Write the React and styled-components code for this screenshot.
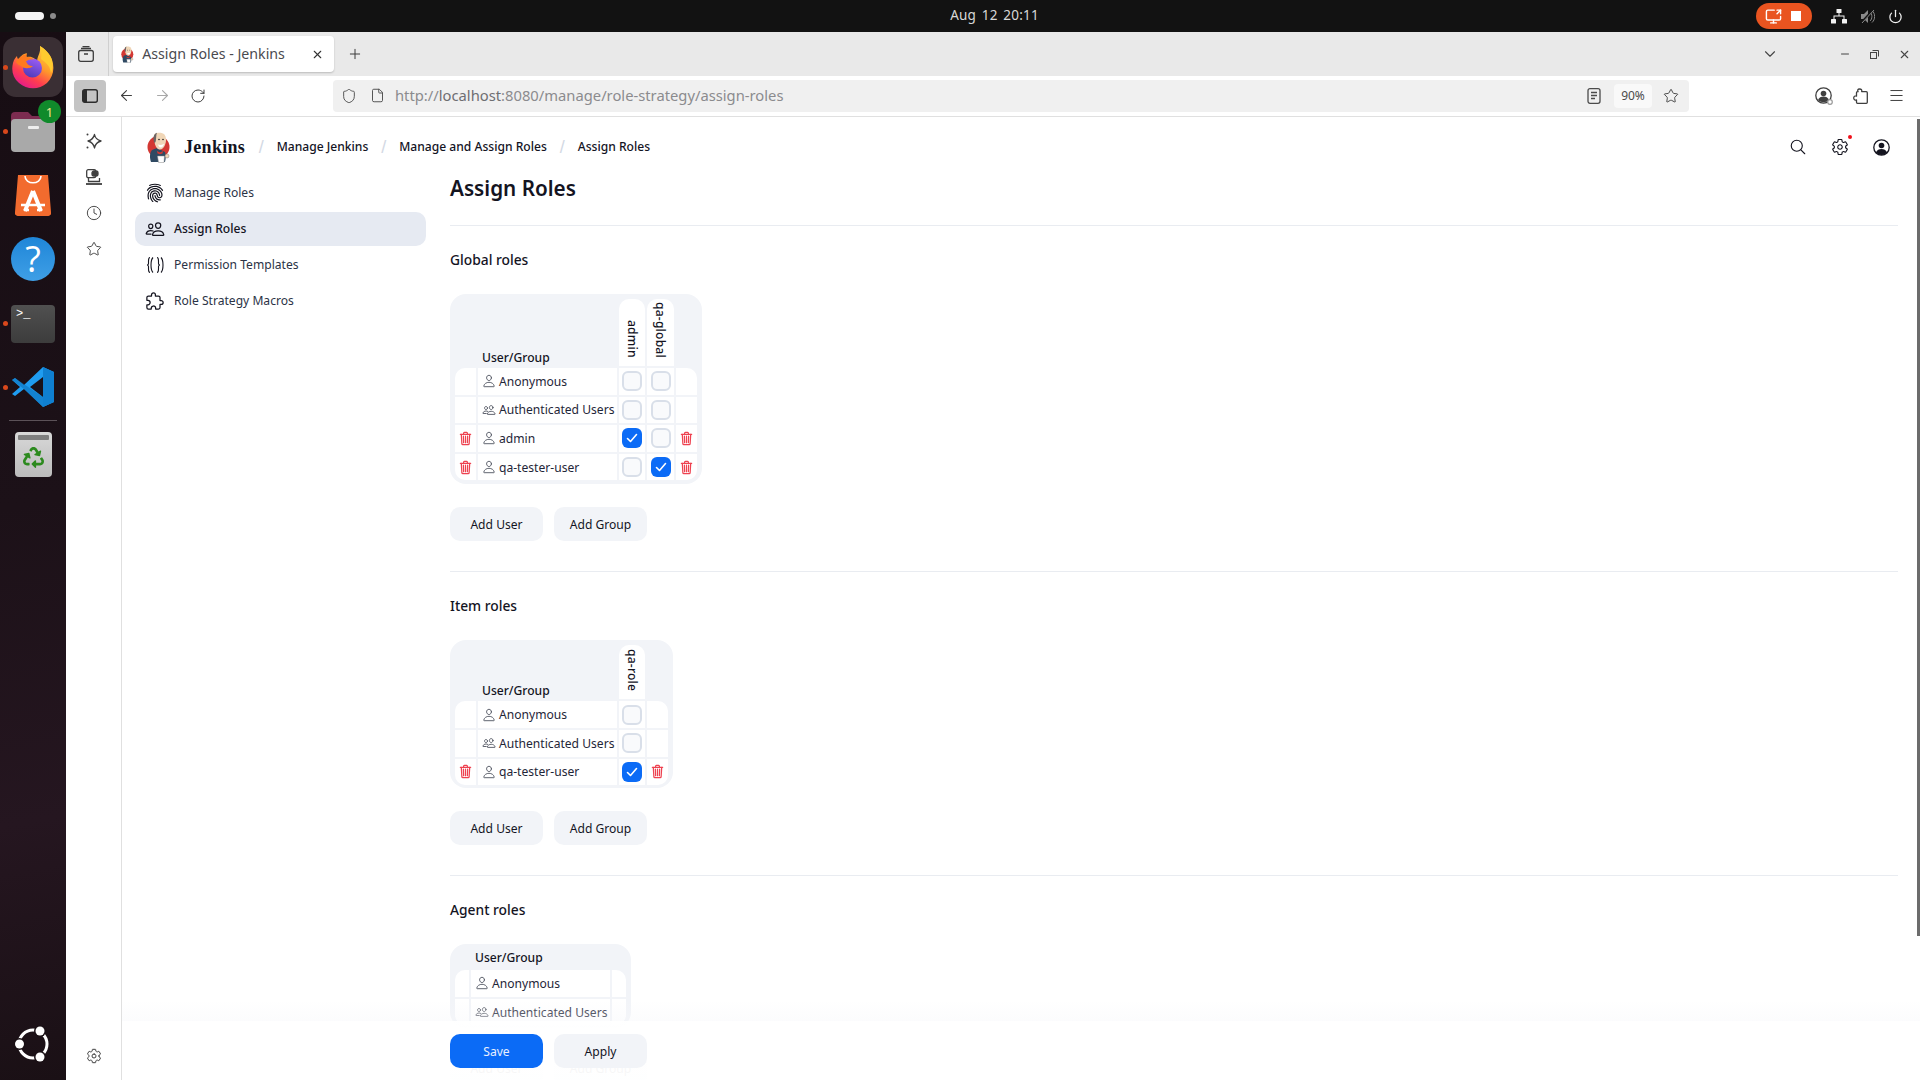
import styled, { createGlobalStyle } from "styled-components";
import {
  ArrowLeft,
  ArrowRight,
  ChevronDown,
  Clock,
  File,
  Menu,
  Minus,
  Plus,
  Power,
  RotateCw,
  ScreenShare,
  Shield,
  Star,
  X,
} from "lucide-react";
import {
  IoExtensionPuzzleOutline,
  IoFingerPrint,
  IoPeopleOutline,
  IoPersonOutline,
  IoSearchOutline,
  IoSettingsOutline,
  IoTrashOutline,
} from "react-icons/io5";
import { FaRecycle } from "react-icons/fa";

const UI_FONT = `"Noto Sans", "Open Sans", sans-serif`;

const GlobalStyle = createGlobalStyle`
  html, body {
    margin: 0;
    height: 100%;
    overflow: hidden;
    background: #fff;
    font-family: ${UI_FONT};
  }
  * { box-sizing: border-box; }
`;

const Desktop = styled.div`
  width: 1920px;
  height: 1080px;
  display: flex;
  flex-direction: column;
  overflow: hidden;
`;

/* ---------- gnome top bar ---------- */
const TopBar = styled.div`
  height: 32px;
  flex: none;
  background: #121212;
  display: grid;
  grid-template-columns: 1fr auto 1fr;
  align-items: center;
  padding: 0 17px 0 15px;
`;
const Workspaces = styled.div`
  display: flex;
  align-items: center;
  gap: 6px;
`;
const ActivePill = styled.span`
  width: 29px;
  height: 8px;
  border-radius: 4px;
  background: #f4f4f4;
`;
const WorkspaceDot = styled.span`
  width: 6px;
  height: 6px;
  border-radius: 50%;
  background: #8b8b8b;
`;
const Clockface = styled.div`
  color: #d8d8d8;
  font-size: 13.5px;
  line-height: 30px;
  height: 32px;
  margin-left: 71px;
  letter-spacing: 0.2px;
  word-spacing: 2px;
`;
const Tray = styled.div`
  display: flex;
  align-items: center;
  justify-content: flex-end;
  color: #f2f2f2;
`;
const RecordPill = styled.div`
  width: 56px;
  height: 26px;
  border-radius: 13px;
  background: #e95420;
  display: flex;
  align-items: center;
  gap: 9px;
  padding-left: 9px;
  margin-right: 19px;
`;
const StopSquare = styled.span`
  width: 10px;
  height: 10px;
  background: #fff;
`;
const TrayGap = styled.div`
  display: flex;
  align-items: center;
  gap: 13px;
`;

/* ---------- dock ---------- */
const Workspace = styled.div`
  flex: 1;
  display: flex;
  min-height: 0;
`;
const Dock = styled.div`
  width: 66px;
  flex: none;
  background: linear-gradient(170deg, #170d13 0%, #1c1118 45%, #251620 75%, #1a1015 100%);
  display: flex;
  flex-direction: column;
  align-items: center;
  padding: 3px 0 0;
`;
const DockSlot = styled.div`
  position: relative;
  width: 66px;
  height: 64px;
  flex: none;
  display: flex;
  align-items: center;
  justify-content: center;
`;
const FoxTile = styled.div`
  width: 60px;
  height: 60px;
  border-radius: 13px;
  background: #3a2f34;
  display: flex;
  align-items: center;
  justify-content: center;
`;
const RunDot = styled.span`
  position: absolute;
  left: 3px;
  top: 30px;
  width: 5px;
  height: 5px;
  border-radius: 50%;
  background: #d9481c;
`;
const Badge = styled.span`
  position: absolute;
  left: 38px;
  top: 1px;
  width: 23px;
  height: 23px;
  border-radius: 50%;
  background: #108a2b;
  color: #f1e58a;
  font-size: 13px;
  display: flex;
  align-items: center;
  justify-content: center;
`;
const HelpDisc = styled.div`
  width: 44px;
  height: 44px;
  border-radius: 50%;
  background: linear-gradient(#1f86d8, #3f9fe6);
  color: #fff;
  font-size: 36px;
  line-height: 44px;
  text-align: center;
  font-family: "Open Sans", sans-serif;
`;
const TerminalTile = styled.div`
  width: 44px;
  height: 38px;
  margin-top: 2px;
  border-radius: 4px;
  background: linear-gradient(#505050, #3c3c3c);
  color: #fff;
  font: 12px/16px "Liberation Mono", monospace;
  padding: 1px 0 0 5px;
`;
const DockRule = styled.div`
  width: 48px;
  height: 1px;
  background: #5c5258;
  margin: 1px 0;
  flex: none;
`;
const TrashTile = styled.div`
  width: 37px;
  height: 45px;
  border-radius: 4px;
  background: linear-gradient(#d8d8d8, #bcbcbc);
  padding: 3px 3px 0;
  display: flex;
  flex-direction: column;
  align-items: center;
  color: #2c8a1e;
  gap: 7px;
`;
const TrashBar = styled.span`
  width: 100%;
  height: 5px;
  background: #7e7e7e;
  border-radius: 1px;
`;
const DockBottom = styled.div`
  margin-top: auto;
  margin-bottom: 12px;
`;

/* ---------- browser chrome ---------- */
const Browser = styled.div`
  flex: 1;
  min-width: 0;
  display: flex;
  flex-direction: column;
`;
const TabStrip = styled.div`
  height: 44px;
  flex: none;
  background: #e9e9e9;
  display: flex;
  align-items: center;
  color: #3d3d3d;
`;
const ViewButton = styled.div`
  width: 43px;
  height: 100%;
  border-right: 1px solid #cfcfcf;
  display: flex;
  align-items: center;
  justify-content: center;
  padding-right: 3px;
`;
const Tab = styled.div`
  width: 221px;
  height: 36px;
  margin-left: 4px;
  background: #fff;
  border-radius: 4px;
  box-shadow: 0 1px 2px rgba(0, 0, 0, 0.2);
  display: flex;
  align-items: center;
  padding: 0 10px 0 8px;
  gap: 8px;
`;
const TabTitle = styled.span`
  flex: 1;
  font-size: 14.2px;
  line-height: 20px;
  color: #4a4a4f;
  white-space: nowrap;
`;
const NewTab = styled.div`
  margin-left: 13px;
  display: flex;
`;
const WindowControls = styled.div`
  margin-left: auto;
  display: flex;
  align-items: center;
  color: #454545;
  padding-right: 1px;
`;
const ListTabs = styled.div`
  display: flex;
  margin-right: 52px;
`;
const WinButton = styled.div`
  width: 29.5px;
  display: flex;
  justify-content: center;
`;
const NavBar = styled.div`
  height: 41px;
  flex: none;
  background: #fff;
  border-bottom: 1px solid #e0e0e0;
  display: flex;
  align-items: center;
  padding: 0 6px 1px 8px;
`;
const SidebarToggle = styled.div`
  width: 32px;
  height: 32px;
  border-radius: 4px;
  background: #c4c4c4;
  display: flex;
  align-items: center;
  justify-content: center;
  margin-right: 2px;
`;
const NavButton = styled.div`
  width: 36px;
  height: 32px;
  flex: none;
  display: flex;
  align-items: center;
  justify-content: center;
  color: ${(p) => (p.$muted ? "#a8a8a8" : "#3f3f3f")};
`;
const UrlBar = styled.div`
  width: 1356px;
  height: 32px;
  margin-left: 117px;
  border-radius: 4px;
  background: #f0f0f0;
  display: flex;
  align-items: center;
  padding: 0 0 0 2px;
  color: #4b4b4b;
`;
const UrlIcon = styled.span`
  width: 28px;
  flex: none;
  display: flex;
  justify-content: center;
`;
const UrlText = styled.span`
  flex: 1;
  margin-left: 4px;
  font-size: 14.75px;
  line-height: 18px;
  padding-bottom: 2px;
  color: #8b8b8e;
  white-space: nowrap;
`;
const UrlHost = styled.span`
  color: #6e6e72;
`;
const ZoomChip = styled.span`
  width: 38px;
  height: 24px;
  margin: 0 1px 0 13px;
  border-radius: 4px;
  background: #f9f9f9;
  font-size: 12px;
  color: #4b4b4b;
  display: flex;
  align-items: center;
  justify-content: center;
`;
const NavRight = styled.div`
  margin-left: auto;
  display: flex;
`;
const BrowserBody = styled.div`
  flex: 1;
  min-height: 0;
  display: flex;
`;
const FoxSidebar = styled.div`
  width: 56px;
  flex: none;
  border-right: 1px solid #e0e0e0;
  background: #fff;
  display: flex;
  flex-direction: column;
  align-items: center;
  padding: 6px 0;
  color: #3f3f3f;
`;
const FoxButton = styled.div`
  width: 36px;
  height: 36px;
  display: flex;
  align-items: center;
  justify-content: center;
  ${(p) => p.$bottom && "margin-top: auto;"}
`;

/* ---------- jenkins page ---------- */
const Page = styled.div`
  position: relative;
  flex: 1;
  min-width: 0;
  overflow: hidden;
  background: #fff;
  color: #14141f;
`;
const Header = styled.header`
  height: 58px;
  display: flex;
  align-items: center;
  padding: 2px 30px 0 25px;
`;
const Brand = styled.div`
  display: flex;
  align-items: center;
  gap: 13px;
  font: 700 18px "Liberation Serif", serif;
  letter-spacing: 0.3px;
  color: #14141f;
`;
const Crumbs = styled.nav`
  display: flex;
  align-items: center;
  gap: 14.5px;
  margin-left: 15px;
  font-size: 12.1px;
  font-weight: 500;
  line-height: 16px;
`;
const CrumbSlash = styled.span`
  width: 2px;
  display: flex;
  justify-content: center;
  color: #d3d9e4;
  font: 18px "Liberation Sans", sans-serif;
`;
const HeaderActions = styled.div`
  margin-left: auto;
  display: flex;
  align-items: center;
  gap: 24px;
  color: #14141f;
`;
const HeaderAction = styled.div`
  position: relative;
  display: flex;
`;
const AlertDot = styled.span`
  position: absolute;
  top: -3px;
  right: -3px;
  width: 4px;
  height: 4px;
  border-radius: 50%;
  background: #f0101a;
`;
const Columns = styled.div`
  display: grid;
  grid-template-columns: 291px 1fr;
  column-gap: 24px;
  padding: 0 22px 0 13px;
`;
const SideNav = styled.nav`
  display: flex;
  flex-direction: column;
  gap: 2px;
  padding-top: 1px;
`;
const SideItem = styled.div`
  height: 34px;
  border-radius: 10px;
  display: flex;
  align-items: center;
  gap: 9px;
  padding: 0 0 1px 10px;
  font-size: 12.1px;
  color: ${(p) => (p.$active ? "#14141f" : "#2b3346")};
  font-weight: ${(p) => (p.$active ? 500 : 400)};
  background: ${(p) => (p.$active ? "#e6eaf2" : "transparent")};
`;
const SideIcon = styled.span`
  width: 20px;
  display: flex;
  justify-content: center;
  color: #14141f;
`;
const Main = styled.main`
  min-width: 0;
`;
const Title = styled.h1`
  margin: 0;
  height: 51px;
  font-size: 20.7px;
  line-height: 26px;
  font-weight: 600;
  border-bottom: 1px solid #e9ecf1;
`;
const Section = styled.section`
  padding: 24px 0 30px;
  border-bottom: 1px solid #e9ecf1;
`;
const SectionTitle = styled.h2`
  margin: 0 0 25px;
  padding-top: 1px;
  font-size: 13.8px;
  line-height: 18px;
  font-weight: 500;
`;
const TableFrame = styled.div`
  display: inline-block;
  vertical-align: top;
  padding: 3px 3px ${(p) => p.$tail}px;
  border-radius: 16px;
  background: #f2f4f8;
`;
const RoleTable = styled.table`
  border-collapse: separate;
  border-spacing: 2px;
  font-size: 12.1px;
`;
const HeadName = styled.th`
  vertical-align: bottom;
  text-align: left;
  font-weight: 500;
  padding: 0 0 ${(p) => (p.$flat ? 2 : 0)}px 4px;
  line-height: 17px;
`;
const HeadRole = styled.th`
  background: #fff;
  border-radius: 10px 10px 0 0;
  font-weight: 500;
  padding: 2px 0 4px;
  vertical-align: bottom;
  width: ${(p) => p.$w}px;
  height: ${(p) => p.$h}px;
`;
const VerticalLabel = styled.span`
  writing-mode: vertical-rl;
  display: inline-block;
  line-height: 17px;
  letter-spacing: 0.2px;
`;
const Edge = styled.td`
  background: #fff;
  width: ${(p) => p.$w}px;
  min-width: ${(p) => p.$w}px;
  height: 26.6px;
  padding: 0;
  text-align: center;
  color: #ee4250;
  line-height: 0;
  ${(p) => p.$first && p.$left && "border-top-left-radius: 10px;"}
  ${(p) => p.$first && !p.$left && "border-top-right-radius: 10px;"}
  ${(p) => p.$last && p.$left && "border-bottom-left-radius: 10px;"}
  ${(p) => p.$last && !p.$left && "border-bottom-right-radius: 10px;"}
`;
const NameCell = styled.td`
  background: #fff;
  width: 139px;
  min-width: 139px;
  padding: 0 0 0 4px;
  white-space: nowrap;
`;
const NameInner = styled.span`
  display: flex;
  align-items: center;
  gap: 3px;
  color: #1f2638;
  svg {
    color: #4a4f5c;
    flex: none;
  }
`;
const CheckCell = styled.td`
  background: #fff;
  padding: 0;
  text-align: center;
  line-height: 0;
`;
const CheckBox = styled.span`
  display: inline-flex;
  align-items: center;
  justify-content: center;
  width: 20px;
  height: 20px;
  border-radius: 6px;
  border: ${(p) => (p.$on ? "none" : "2px solid #d9dfe9")};
  background: ${(p) => (p.$on ? "#0b6bf6" : "#f9fafc")};
`;
const ButtonRow = styled.div`
  display: flex;
  gap: 11px;
  margin-top: 23px;
`;
const Button = styled.div`
  width: 93px;
  height: 34px;
  padding-top: 1px;
  border-radius: 10px;
  font-size: 12.1px;
  line-height: 16px;
  display: flex;
  align-items: center;
  justify-content: center;
  background: ${(p) => (p.$primary ? "#0b6bf6" : "#f2f4f8")};
  color: ${(p) => (p.$primary ? "#e8f0ff" : "#14141f")};
`;
const SaveBar = styled.div`
  position: absolute;
  left: 0;
  right: 0;
  bottom: 0;
  height: 80px;
  padding: 34px 0 0 328px;
  background:
    linear-gradient(rgba(248, 249, 251, 0), rgba(246, 247, 250, 0.4)) top / 100% 21px no-repeat,
    linear-gradient(rgba(255, 255, 255, 0.97), rgba(255, 255, 255, 0.96)) bottom / 100% 59px no-repeat;
`;
const SaveRow = styled(ButtonRow)`
  margin-top: 0;
`;
const Scrollbar = styled.div`
  position: absolute;
  top: 2px;
  right: 0;
  width: 3px;
  height: 817px;
  background: #6c6c6c;
`;

/* ---------- drawn icons ---------- */
const JenkinsLogo = ({ size = 31 }) => (
  <svg width={(size * 24) / 31} height={size} viewBox="0 0 24 31">
    <circle cx="11.5" cy="15" r="11" fill="#d33833" />
    <path d="M4 30c-1.500-4-1.500-9 1-12l5-2 8 4c1 3 1 6 0 10z" fill="#2f4a63" />
    <path d="M7 2.500C9 .5 15 0 17.500 2.500c2 2.500 2 7 .5 10.500-1 3-3.500 5-6 4.500-2.500-1-4-4-4.500-7.500z" fill="#f0d6b7" />
    <path d="M7.500 11C5.500 6 6.500 2 10 .7 9 3 9.300 6 8.800 9c-.3 1-.6 1.800-1.300 2z" fill="#6b6464" />
    <path d="M11 12.500c2 .8 4 .5 6-.8-.4 2.300-1.800 3.800-3.300 3.800S11.500 14 11 12.500z" fill="#fff" />
    <circle cx="12" cy="7.500" r=".8" fill="#231f20" />
    <circle cx="16" cy="7.500" r=".8" fill="#231f20" />
    <path d="M10 19l3 1.500 3-1.500-.5 2.500-2.500.7-2.500-.7z" fill="#d33833" />
    <path d="M10.500 24h7l-.5 6.500h-5.500z" fill="#fff" stroke="#8a8a8a" strokeWidth=".5" />
    <circle cx="20" cy="24" r="2" fill="#f0d6b7" stroke="#6b6464" strokeWidth=".4" />
  </svg>
);

const FirefoxLogo = () => (
  <svg width="44" height="44" viewBox="0 0 44 44">
    <defs>
      <linearGradient id="ffBody" x1="0.85" y1="0.1" x2="0.3" y2="1">
        <stop offset="0" stopColor="#ffd23d" />
        <stop offset="0.4" stopColor="#ff9a2a" />
        <stop offset="0.72" stopColor="#ff3d4f" />
        <stop offset="1" stopColor="#e31b8b" />
      </linearGradient>
      <linearGradient id="ffCore" x1="0.7" y1="0" x2="0.3" y2="1">
        <stop offset="0" stopColor="#9a5cf5" />
        <stop offset="1" stopColor="#4f3bb8" />
      </linearGradient>
    </defs>
    <path d="M29 1c6 4 10 8 12 14 3 9 1 17-5 23-8 7-20 7-28 0C2 33 0 26 2 18c1-4 3-6 4-7 0 2 1 3 2 4 1-4 4-6 8-7-1 2-1 3 0 4 5-1 9 2 10 5 0-6 4-9 3-16z" fill="url(#ffBody)" />
    <circle cx="21.500" cy="23" r="9.500" fill="url(#ffCore)" />
    <path d="M5 17c2-4 6-7 11-8l-1 3c3-.5 6 .5 8 3-3-1-6 0-8 1 1 3 3 5 7 5-3 3-9 3-12 0-2-1-4-2-5-4z" fill="#ff7a1f" />
    <path d="M29 1c5 3 10 8 12 14 1 5 1 9-1 13-1-8-6-11-10-14 1-5 0-9-1-13z" fill="#ffcb2f" />
  </svg>
);

const FilesIcon = () => (
  <svg width="44" height="42" viewBox="0 0 44 42">
    <path d="M0 6a4 4 0 0 1 4-4h13l4 4h19a4 4 0 0 1 4 4v10H0z" fill="#7c2c50" />
    <rect y="9" width="44" height="33" rx="4" fill="#a9a9a9" />
    <rect x="17" y="16" width="11" height="3" rx="1" fill="#eee" />
  </svg>
);

const StoreIcon = () => (
  <svg width="36" height="42" viewBox="0 0 36 42">
    <path d="M3 1h30l3 37a3 3 0 0 1-3 4H3a3 3 0 0 1-3-4z" fill="#f26b2e" />
    <path d="M10 2c0 9 16 9 16 0" fill="none" stroke="#fff" strokeWidth="1.6" />
    <path d="M18 17l-8 20M18 17l8 20" stroke="#fff" strokeWidth="4" fill="none" />
    <path d="M6 31h24M9 36h5M22 36h5" stroke="#fff" strokeWidth="2.600" />
  </svg>
);

const VsCodeIcon = () => (
  <svg width="42" height="42" viewBox="0 0 42 42">
    <path d="M31 1L12 19 3 12 0 14l8 7-8 7 3 2 9-7 19 18 11-5V6z" fill="#1f9cf0" />
    <path d="M31 1l11 5v30l-11 5z" fill="#0f7fd0" />
    <path d="M31 11v20L18 21z" fill="#1a1118" />
    <path d="M0 14l3-2 28 19v10L12 23z" fill="#0a6fb8" opacity=".55" />
  </svg>
);

const UbuntuLogo = () => (
  <svg width="38" height="38" viewBox="0 0 38 38">
    <circle cx="19" cy="19" r="14" fill="none" stroke="#fff" strokeWidth="3" />
    <circle cx="5.500" cy="19" r="6" fill="#1a1015" />
    <circle cx="26" cy="6" r="6" fill="#1a1015" />
    <circle cx="26" cy="32" r="6" fill="#1a1015" />
    <circle cx="5.500" cy="19" r="4.500" fill="#fff" />
    <circle cx="26" cy="6" r="4.500" fill="#fff" />
    <circle cx="26" cy="32" r="4.500" fill="#fff" />
  </svg>
);

const NetworkIcon = () => (
  <svg width="16" height="15" viewBox="0 0 16 15" fill="#f2f2f2">
    <rect x="5.500" y="0" width="5" height="4" rx=".5" />
    <rect x="0" y="10" width="5" height="4.500" rx=".5" />
    <rect x="11" y="10" width="5" height="4.500" rx=".5" />
    <path d="M7.500 4h1v2.500h5V10h-1V7.500h-9V10h-1V6.500h5z" />
  </svg>
);

const MutedIcon = () => (
  <svg width="15" height="15" viewBox="0 0 15 15" fill="#8a8a8a">
    <path d="M1 5h3l4-4v13l-4-4H1z" />
    <path d="M10 3c2.500 2 2.500 7 0 9M12 1.500c3.500 3 3.500 9 0 12" fill="none" stroke="#8a8a8a" strokeWidth="1" />
    <path d="M1 14L13 1" stroke="#121212" strokeWidth="2" />
    <path d="M2 14L14 1" stroke="#8a8a8a" strokeWidth="1" />
  </svg>
);

const ViewIcon = () => (
  <svg width="16" height="16" viewBox="0 0 16 16" fill="none" stroke="#3d3d3d" strokeWidth="1.300">
    <rect x=".7" y="4.500" width="14.600" height="10.800" rx="2" />
    <path d="M3 2.500h10M4.500.7h7M6 8h4" />
  </svg>
);

const SidebarIcon = () => (
  <svg width="16" height="14" viewBox="0 0 16 14">
    <rect x=".7" y=".7" width="14.600" height="12.600" rx="2" fill="none" stroke="#2c2c2c" strokeWidth="1.400" />
    <rect x="1" y="1" width="4" height="12" fill="#2c2c2c" />
  </svg>
);

const ReaderIcon = () => (
  <svg width="14" height="16" viewBox="0 0 14 16" fill="none" stroke="#4b4b4b" strokeWidth="1.300">
    <rect x="1" y=".7" width="12" height="14.600" rx="2" />
    <path d="M4 4.500h6M4 7.500h6M4 10.500h4" />
  </svg>
);

const ProfileIcon = () => (
  <svg width="18" height="18" viewBox="0 0 18 18">
    <circle cx="8.500" cy="8.500" r="7.700" fill="none" stroke="#3f3f3f" strokeWidth="1.300" />
    <circle cx="8.500" cy="6.500" r="2.800" fill="#3f3f3f" />
    <path d="M3 13c1-2.500 3-3.500 5.500-3.500S13 10.500 14 13c-3 3-8 3-11 0z" fill="#3f3f3f" />
    <circle cx="15" cy="15" r="2.300" fill="#fff" stroke="#9a9a9a" strokeWidth="1.200" />
  </svg>
);

const ExtensionsIcon = () => (
  <svg width="15" height="16" viewBox="0 0 15 16" fill="none" stroke="#3f3f3f" strokeWidth="1.300" strokeLinejoin="round">
    <path d="M6.500 1C8.500 1 9 2 8.700 3.700h4.600c.6 0 1 .4 1 1v9.600c0 .6-.4 1-1 1H4.500c-.6 0-1-.4-1-1V12C2 12.300.7 11.500.7 10S2 7.700 3.500 8V4.700c0-.6.400-1 1-1h.6C4.300 2.300 4.700 1 6.500 1z" />
  </svg>
);

const SparkleIcon = () => (
  <svg width="16" height="17" viewBox="0 0 16 17" fill="none" stroke="#3f3f3f" strokeWidth="1.300" strokeLinejoin="round">
    <path d="M8.500 1.500c.7 3.600 2.300 5.400 6.500 6.500-4.200 1.100-5.800 2.900-6.500 7-.8-4.100-2.400-5.900-6.500-7 4.100-1.100 5.700-2.900 6.500-6.500z" />
    <circle cx="1.500" cy="1.500" r="1" fill="#3f3f3f" stroke="none" />
    <circle cx="1.500" cy="14.500" r="1" fill="#3f3f3f" stroke="none" />
  </svg>
);

const SyncedIcon = () => (
  <svg width="16" height="16" viewBox="0 0 16 16" fill="none" stroke="#3f3f3f" strokeWidth="1.300">
    <rect x=".7" y=".7" width="9" height="8" rx="1.500" />
    <rect x="6" y="2" width="6" height="5" rx="2" fill="#3f3f3f" />
    <path d="M2.500 9v3.500h11V9" />
    <path d="M0 15h16" strokeWidth="1.800" />
  </svg>
);

const TemplateIcon = () => (
  <svg width="18" height="18" viewBox="0 0 18 18" fill="none" stroke="#14141f" strokeWidth="1.100">
    <path d="M4 1.500C2.500 1.500 2.500 3 2.500 5v2.500C2.500 8.500 2 9 1 9c1 0 1.500.5 1.500 1.500V13c0 2 0 3.500 1.500 3.500" />
    <path d="M7 1.500C5.500 3 5 6 5 9s.5 6 2 7.500" />
    <path d="M11 1.500c1.500 0 1.500 1.500 1.500 3.500v2.500c0 1 .5 1.500 1.500 1.500-1 0-1.500.5-1.500 1.500V13c0 2 0 3.500-1.500 3.500" />
    <path d="M15 1.500c1.500 1.500 2 4.500 2 7.500s-.5 6-2 7.500" />
  </svg>
);

const AccountIcon = () => (
  <svg width="17" height="17" viewBox="0 0 17 17">
    <circle cx="8.500" cy="8.500" r="7.700" fill="none" stroke="#14141f" strokeWidth="1.300" />
    <circle cx="8.500" cy="6.500" r="2.800" fill="#14141f" />
    <path d="M2.800 13.500c1.200-2.500 3.200-3.500 5.700-3.500s4.500 1 5.700 3.500c-3 3.200-8.400 3.200-11.400 0z" fill="#14141f" />
  </svg>
);

const CheckMark = () => (
  <svg width="12" height="10" viewBox="0 0 12 10" fill="none" stroke="#fff" strokeWidth="1.600" strokeLinecap="round" strokeLinejoin="round">
    <path d="M1.500 5.500L4.500 8.500 10.500 1.500" />
  </svg>
);

const RedTrash = styled(IoTrashOutline)`
  width: 15px;
  height: 15px;
  fill: #fcc8cc;
  path {
    stroke-width: 42;
  }
`;

/* ---------- data ---------- */
const globalRows = [
  { name: "Anonymous", checks: [false, false] },
  { name: "Authenticated Users", group: true, checks: [false, false] },
  { name: "admin", removable: true, checks: [true, false] },
  { name: "qa-tester-user", removable: true, checks: [false, true] },
];
const itemRows = [
  { name: "Anonymous", checks: [false] },
  { name: "Authenticated Users", group: true, checks: [false] },
  { name: "qa-tester-user", removable: true, checks: [true] },
];
const agentRows = [
  { name: "Anonymous", checks: [] },
  { name: "Authenticated Users", group: true, checks: [] },
];

const sideItems = [
  { label: "Manage Roles", icon: <IoFingerPrint size={20} /> },
  { label: "Assign Roles", icon: <IoPeopleOutline size={20} />, active: true },
  { label: "Permission Templates", icon: <TemplateIcon /> },
  { label: "Role Strategy Macros", icon: <IoExtensionPuzzleOutline size={20} /> },
];

const Roles = ({ roles, rows, headHeight, edge, tail = 1 }) => (
  <TableFrame $tail={tail}>
    <RoleTable>
      <thead>
        <tr>
          <th />
          <HeadName $flat={roles.length === 0}>User/Group</HeadName>
          {roles.map((r) => (
            <HeadRole key={r.name} $w={r.width} $h={headHeight}>
              <VerticalLabel>{r.name}</VerticalLabel>
            </HeadRole>
          ))}
          <th />
        </tr>
      </thead>
      <tbody>
        {rows.map((row, i) => (
          <tr key={row.name}>
            <Edge $w={edge} $left $first={i === 0} $last={i === rows.length - 1}>
              {row.removable && <RedTrash />}
            </Edge>
            <NameCell>
              <NameInner>
                {row.group ? <IoPeopleOutline size={14} /> : <IoPersonOutline size={14} />}
                {row.name}
              </NameInner>
            </NameCell>
            {row.checks.map((on, c) => (
              <CheckCell key={c}>
                <CheckBox $on={on}>{on && <CheckMark />}</CheckBox>
              </CheckCell>
            ))}
            <Edge $w={edge} $first={i === 0} $last={i === rows.length - 1}>
              {row.removable && <RedTrash />}
            </Edge>
          </tr>
        ))}
      </tbody>
    </RoleTable>
  </TableFrame>
);

const AddButtons = () => (
  <ButtonRow>
    <Button>Add User</Button>
    <Button>Add Group</Button>
  </ButtonRow>
);

const DockBar = () => (
  <Dock>
    <DockSlot>
      <RunDot />
      <FoxTile>
        <FirefoxLogo />
      </FoxTile>
    </DockSlot>
    <DockSlot>
      <RunDot />
      <FilesIcon />
      <Badge>1</Badge>
    </DockSlot>
    <DockSlot>
      <StoreIcon />
    </DockSlot>
    <DockSlot>
      <HelpDisc>?</HelpDisc>
    </DockSlot>
    <DockSlot>
      <RunDot />
      <TerminalTile>&gt;_</TerminalTile>
    </DockSlot>
    <DockSlot>
      <RunDot />
      <VsCodeIcon />
    </DockSlot>
    <DockRule />
    <DockSlot>
      <TrashTile>
        <TrashBar />
        <FaRecycle size={21} />
      </TrashTile>
    </DockSlot>
    <DockBottom>
      <UbuntuLogo />
    </DockBottom>
  </Dock>
);

const App = () => (
  <Desktop>
    <GlobalStyle />
    <TopBar>
      <Workspaces>
        <ActivePill />
        <WorkspaceDot />
      </Workspaces>
      <Clockface>Aug 12 20:11</Clockface>
      <Tray>
        <RecordPill>
          <ScreenShare size={17} color="#fff" />
          <StopSquare />
        </RecordPill>
        <TrayGap>
          <NetworkIcon />
          <MutedIcon />
          <Power size={15} />
        </TrayGap>
      </Tray>
    </TopBar>
    <Workspace>
      <DockBar />
      <Browser>
        <TabStrip>
          <ViewButton>
            <ViewIcon />
          </ViewButton>
          <Tab>
            <JenkinsLogo size={17} />
            <TabTitle>Assign Roles - Jenkins</TabTitle>
            <X size={13} color="#333" />
          </Tab>
          <NewTab>
            <Plus size={16} strokeWidth={1.500} />
          </NewTab>
          <WindowControls>
            <ListTabs>
              <ChevronDown size={18} strokeWidth={1.500} />
            </ListTabs>
            <WinButton>
              <Minus size={12} />
            </WinButton>
            <WinButton>
              <svg width="9" height="9" viewBox="0 0 9 9" fill="none" stroke="#454545">
                <rect x=".5" y="2.500" width="6" height="6" />
                <path d="M2.500 .5h6v6" />
              </svg>
            </WinButton>
            <WinButton>
              <X size={13} />
            </WinButton>
          </WindowControls>
        </TabStrip>
        <NavBar>
          <SidebarToggle>
            <SidebarIcon />
          </SidebarToggle>
          <NavButton>
            <ArrowLeft size={17} strokeWidth={1.500} />
          </NavButton>
          <NavButton $muted>
            <ArrowRight size={17} strokeWidth={1.500} />
          </NavButton>
          <NavButton>
            <RotateCw size={16} strokeWidth={1.500} />
          </NavButton>
          <UrlBar>
            <UrlIcon>
              <Shield size={16} strokeWidth={1.400} />
            </UrlIcon>
            <UrlIcon>
              <File size={15} strokeWidth={1.500} />
            </UrlIcon>
            <UrlText>
              http://<UrlHost>localhost</UrlHost>:8080/manage/role-strategy/assign-roles
            </UrlText>
            <ReaderIcon />
            <ZoomChip>90%</ZoomChip>
            <NavButton>
              <Star size={16} strokeWidth={1.400} />
            </NavButton>
          </UrlBar>
          <NavRight>
            <NavButton>
              <ProfileIcon />
            </NavButton>
            <NavButton>
              <ExtensionsIcon />
            </NavButton>
            <NavButton>
              <Menu size={17} strokeWidth={1.400} />
            </NavButton>
          </NavRight>
        </NavBar>
        <BrowserBody>
          <FoxSidebar>
            <FoxButton>
              <SparkleIcon />
            </FoxButton>
            <FoxButton>
              <SyncedIcon />
            </FoxButton>
            <FoxButton>
              <Clock size={16} strokeWidth={1.400} />
            </FoxButton>
            <FoxButton>
              <Star size={16} strokeWidth={1.400} />
            </FoxButton>
            <FoxButton $bottom>
              <IoSettingsOutline size={16} />
            </FoxButton>
          </FoxSidebar>
          <Page>
            <Header>
              <Brand>
                <JenkinsLogo />
                Jenkins
              </Brand>
              <Crumbs>
                <CrumbSlash>/</CrumbSlash>
                <span>Manage Jenkins</span>
                <CrumbSlash>/</CrumbSlash>
                <span>Manage and Assign Roles</span>
                <CrumbSlash>/</CrumbSlash>
                <span>Assign Roles</span>
              </Crumbs>
              <HeaderActions>
                <HeaderAction>
                  <IoSearchOutline size={18} />
                </HeaderAction>
                <HeaderAction>
                  <IoSettingsOutline size={18} />
                  <AlertDot />
                </HeaderAction>
                <HeaderAction>
                  <AccountIcon />
                </HeaderAction>
              </HeaderActions>
            </Header>
            <Columns>
              <SideNav>
                {sideItems.map((item) => (
                  <SideItem key={item.label} $active={item.active}>
                    <SideIcon>{item.icon}</SideIcon>
                    {item.label}
                  </SideItem>
                ))}
              </SideNav>
              <Main>
                <Title>Assign Roles</Title>
                <Section>
                  <SectionTitle>Global roles</SectionTitle>
                  <Roles
                    roles={[
                      { name: "admin", width: 26 },
                      { name: "qa-global", width: 27 },
                    ]}
                    rows={globalRows}
                    headHeight={67}
                    edge={21}
                    tail={2}
                  />
                  <AddButtons />
                </Section>
                <Section>
                  <SectionTitle>Item roles</SectionTitle>
                  <Roles roles={[{ name: "qa-role", width: 26 }]} rows={itemRows} headHeight={54} edge={21} />
                  <AddButtons />
                </Section>
                <Section>
                  <SectionTitle>Agent roles</SectionTitle>
                  <Roles roles={[]} rows={agentRows} edge={14} />
                  <AddButtons />
                </Section>
              </Main>
            </Columns>
            <SaveBar>
              <SaveRow>
                <Button $primary>Save</Button>
                <Button>Apply</Button>
              </SaveRow>
            </SaveBar>
            <Scrollbar />
          </Page>
        </BrowserBody>
      </Browser>
    </Workspace>
  </Desktop>
);

export default App;
